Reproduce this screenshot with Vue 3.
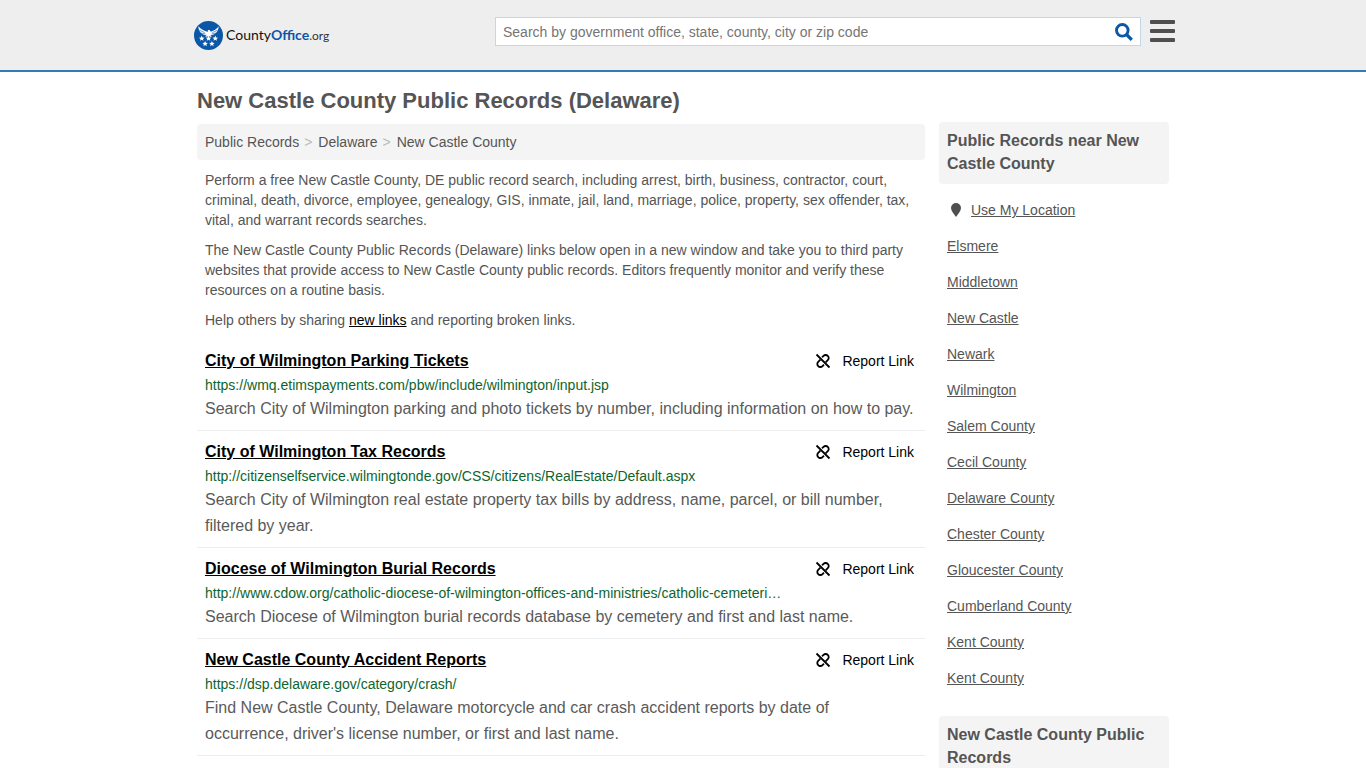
<script setup>
import { ref } from 'vue'

const query = ref('')

const crumbs = ['Public Records', 'Delaware', 'New Castle County']

const records = [
    {
        title: 'City of Wilmington Parking Tickets',
        url: 'https://wmq.etimspayments.com/pbw/include/wilmington/input.jsp',
        text: 'Search City of Wilmington parking and photo tickets by number, including information on how to pay.'
    },
    {
        title: 'City of Wilmington Tax Records',
        url: 'http://citizenselfservice.wilmingtonde.gov/CSS/citizens/RealEstate/Default.aspx',
        text: 'Search City of Wilmington real estate property tax bills by address, name, parcel, or bill number, filtered by year.'
    },
    {
        title: 'Diocese of Wilmington Burial Records',
        url: 'http://www.cdow.org/catholic-diocese-of-wilmington-offices-and-ministries/catholic-cemeteri…',
        text: 'Search Diocese of Wilmington burial records database by cemetery and first and last name.'
    },
    {
        title: 'New Castle County Accident Reports',
        url: 'https://dsp.delaware.gov/category/crash/',
        text: "Find New Castle County, Delaware motorcycle and car crash accident reports by date of occurrence, driver's license number, or first and last name."
    }
]

const nearby = [
    'Elsmere',
    'Middletown',
    'New Castle',
    'Newark',
    'Wilmington',
    'Salem County',
    'Cecil County',
    'Delaware County',
    'Chester County',
    'Gloucester County',
    'Cumberland County',
    'Kent County',
    'Kent County'
]

const stars = [[8, 18], [15, 18], [22, 18], [11.5, 23.5], [18.5, 23.5]]
</script>

<template>
    <header class="site-header">
        <div class="header-inner">
            <a href="#" class="logo">
                <svg class="logo-mark" viewBox="0 0 30 30" aria-hidden="true">
                    <circle cx="15" cy="15" r="15" fill="#0b57a7" />
                    <path
                        d="M4.5 5.5c0 5 3.5 9 8.500 9.500l-1.500 1.500 3.500-.8 3.500.8-1.500-1.500c5-.5 8.500-4.500 8.500-9.500-2 3-5 4.500-8 5.500l-1.500-1.800-2 .1.800 1.200-.8.700c-3.500-1-7-2.500-9.500-5.700z"
                        fill="#fff"
                    />
                    <path
                        d="M5.500 9.500l5.500 2.500M7.500 12.500l4.500 1M24.500 9.500l-5.500 2.500M22.500 12.500l-4.500 1"
                        stroke="#0b57a7"
                        stroke-width="0.6"
                    />
                    <path
                        v-for="(s, i) in stars"
                        :key="i"
                        :transform="`translate(${s[0]} ${s[1]})`"
                        d="M0-2.900L.8-.9 2.900-.8 1.300.5 1.800 2.500 0 1.400-1.800 2.500-1.300.5-2.900-.8-.8-.9z"
                        fill="#fff"
                    />
                </svg>
                <span class="logo-text">County<b>Office</b><span class="logo-tld">.org</span></span>
            </a>

            <form class="search" @submit.prevent>
                <input
                    v-model="query"
                    type="text"
                    class="search-input"
                    aria-label="Search"
                    placeholder="Search by government office, state, county, city or zip code"
                />
                <button class="search-button" type="submit" aria-label="Search">
                    <svg viewBox="0 0 18 18" width="18" height="18" fill="none" stroke="#0b57a7">
                        <circle cx="7.3" cy="7.3" r="5.800" stroke-width="2.900" />
                        <path d="M11.500 11.500l5.300 5.300" stroke-width="3.200" />
                    </svg>
                </button>
            </form>

            <button class="menu-button" type="button" aria-label="Menu">
                <span></span>
                <span></span>
                <span></span>
            </button>
        </div>
    </header>

    <div class="page">
        <main class="content">
            <h1>New Castle County Public Records (Delaware)</h1>

            <nav class="breadcrumbs">
                <template v-for="(crumb, i) in crumbs" :key="crumb">
                    <span v-if="i" class="separator">&gt;</span>
                    <a href="#">{{ crumb }}</a>
                </template>
            </nav>

            <div class="intro">
                <p>
                    Perform a free New Castle County, DE public record search, including arrest, birth,
                    business, contractor, court, criminal, death, divorce, employee, genealogy, GIS, inmate,
                    jail, land, marriage, police, property, sex offender, tax, vital, and warrant records
                    searches.
                </p>
                <p>
                    The New Castle County Public Records (Delaware) links below open in a new window and take
                    you to third party websites that provide access to New Castle County public records.
                    Editors frequently monitor and verify these resources on a routine basis.
                </p>
                <p>Help others by sharing <a href="#">new links</a> and reporting broken links.</p>
            </div>

            <article v-for="record in records" :key="record.title" class="record">
                <div class="record-head">
                    <h2><a href="#">{{ record.title }}</a></h2>
                    <button class="report" type="button">
                        <svg viewBox="0 0 16 16" width="16" height="16" fill="none" stroke="#000" stroke-width="1.800">
                            <path d="M1.500 1.500l13 13" />
                            <path d="M7 4.200l1.500-1.300a3 3 0 0 1 4.300 0 3 3 0 0 1 0 4.300L10.600 9.400" />
                            <path d="M9 11.800l-1.500 1.300a3 3 0 0 1-4.300 0 3 3 0 0 1 0-4.300L5.400 6.600" />
                        </svg>
                        Report Link
                    </button>
                </div>
                <div class="record-url">{{ record.url }}</div>
                <p class="record-text">{{ record.text }}</p>
            </article>
        </main>

        <aside class="sidebar">
            <h3>Public Records near New Castle County</h3>
            <ul>
                <li class="location">
                    <svg viewBox="0 0 10 14" width="10" height="14" aria-hidden="true">
                        <path d="M5 0a5 5 0 0 1 5 5c0 3-3 6-5 9C3 11 0 8 0 5a5 5 0 0 1 5-5z" fill="#4f4f4f" />
                    </svg>
                    <a href="#">Use My Location</a>
                </li>
                <li v-for="(place, i) in nearby" :key="i"><a href="#">{{ place }}</a></li>
            </ul>
            <h3>New Castle County Public Records</h3>
        </aside>
    </div>
</template>

<style>
body {
    margin: 0;
    background: #fff;
    color: #555;
    font-family: "Liberation Sans", Arial, sans-serif;
    font-size: 14px;
    line-height: 20px;
}
</style>

<style scoped>
a {
    color: inherit;
}

button {
    padding: 0;
    border: 0;
    background: none;
    font-family: inherit;
    cursor: pointer;
}

svg {
    flex: none;
    display: block;
}

.site-header {
    background: #eee;
    border-bottom: 2px solid #337ab7;
}

.header-inner {
    display: flex;
    align-items: flex-start;
    max-width: 984px;
    height: 70px;
    margin: 0 auto;
    box-sizing: border-box;
    padding: 17px 0 0 3px;
}

.logo {
    display: flex;
    align-items: center;
    gap: 3px;
    width: 301px;
    height: 36px;
    color: #111;
    text-decoration: none;
}

.logo-mark {
    width: 29px;
    height: 29px;
}

.logo-text {
    font-family: Lato, sans-serif;
    font-size: 14px;
}

.logo-text b {
    color: #0b57a7;
}

.logo-tld {
    color: #333;
    font-size: 12px;
}

.search {
    display: flex;
    flex: 1;
    align-items: center;
    height: 29px;
    box-sizing: border-box;
    border: 1px solid #c3d7e8;
    background: #fff;
}

.search-input {
    flex: 1;
    min-width: 0;
    padding: 0 7px;
    border: 0;
    outline: none;
    background: transparent;
    color: #555;
    font: inherit;
}

.search-input::placeholder {
    color: #757575;
}

.search-button {
    padding-right: 7px;
}

.menu-button {
    display: flex;
    flex-direction: column;
    gap: 5px;
    width: 25px;
    margin: 3px 0 0 9px;
}

.menu-button span {
    height: 4px;
    border-radius: 1px;
    background: #4f4f4f;
}

.page {
    display: flex;
    align-items: flex-start;
    gap: 14px;
    max-width: 972px;
    margin: 0 auto;
}

.content {
    flex: 1;
    min-width: 0;
}

h1 {
    margin: 17px 0 11px;
    font-size: 22px;
    line-height: 24px;
}

.breadcrumbs {
    display: flex;
    gap: 5px;
    padding: 8px;
    border-radius: 4px;
    background: #f4f4f4;
}

.breadcrumbs a {
    text-decoration: none;
}

.separator {
    padding-right: 1px;
    color: #bbb;
}

.intro {
    padding: 10px 8px;
}

.intro p {
    margin: 0 0 10px;
}

.intro p:last-child {
    margin: 0;
}

.intro a {
    color: #000;
}

.record {
    padding: 9px 8px 8px;
    border-bottom: 1px solid #eee;
}

.record-head {
    display: flex;
    justify-content: space-between;
    margin-bottom: 2px;
}

h2 {
    margin: 0;
    color: #000;
    font-size: 16px;
    line-height: 24px;
}

.report {
    display: flex;
    align-items: center;
    gap: 11px;
    padding-right: 3px;
    color: #000;
    font-size: 14px;
    line-height: 24px;
}

.record-url {
    margin-bottom: 1px;
    color: #0d652d;
}

.record-text {
    margin: 0;
    color: #5a5a5a;
    font-size: 16px;
    line-height: 26px;
}

.sidebar {
    flex: none;
    width: 230px;
    padding-top: 50px;
}

h3 {
    margin: 0;
    padding: 7px 8px 9px;
    border-radius: 4px;
    background: #f4f4f4;
    font-size: 16px;
    line-height: 23px;
}

ul {
    margin: 8px 0 20px;
    padding: 0 8px;
    list-style: none;
}

li {
    line-height: 36px;
}

.location {
    display: flex;
    align-items: center;
    gap: 10px;
    padding-left: 4px;
}
</style>
